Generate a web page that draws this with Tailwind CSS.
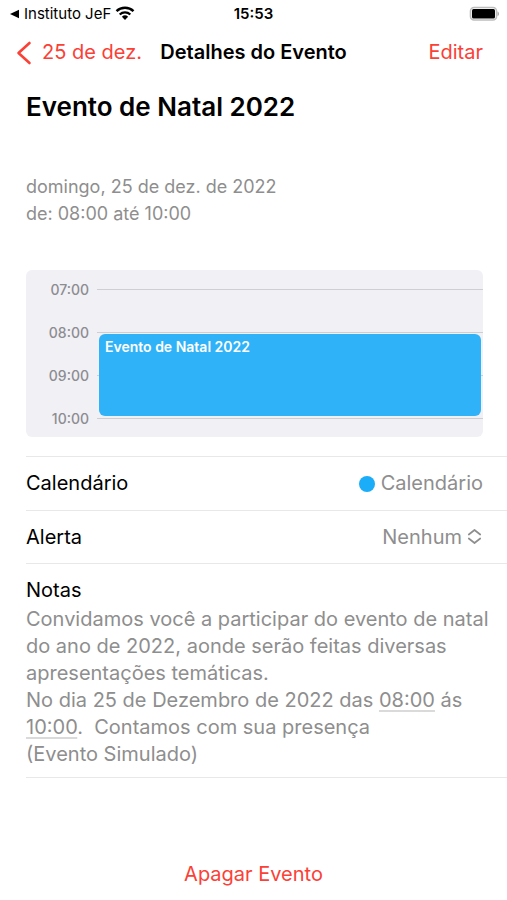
<!DOCTYPE html>
<html lang="pt-BR">
<head>
<meta charset="utf-8">
<meta name="viewport" content="width=device-width, initial-scale=1">
<title>Detalhes do Evento</title>
<script src="https://cdn.jsdelivr.net/npm/@tailwindcss/browser@4"></script>
</head>
<body class="min-h-screen flex flex-col bg-white text-black text-[20px] leading-[27px] font-['Inter','Liberation_Sans',sans-serif]">

<!-- Status bar -->
<div class="grid grid-cols-[1fr_auto_1fr] items-center h-[27px] px-2 text-[15px] leading-[20px]">
  <div class="flex items-center gap-1">
    <svg class="w-3 h-3" viewBox="0 0 12 12" aria-hidden="true"><path d="M2 6 11 1.8v8.4z"/></svg>
    <a href="#">Instituto JeF</a>
    <svg class="w-5 h-4" viewBox="0 0 20 16" fill="none" stroke="#000" aria-label="Wi-Fi"><path d="M1.500 5.200a12.300 12.300 0 0 1 17 0" stroke-width="2.400"/><path d="M4.700 8.500a7.800 7.800 0 0 1 10.600 0" stroke-width="2.300"/><path d="M10 14l-3.100-3.200a4.500 4.500 0 0 1 6.200 0z" fill="#000" stroke="none"/></svg>
  </div>
  <time class="font-semibold">15:53</time>
  <svg class="justify-self-end w-[30px] h-4" viewBox="0 0 30 16" aria-label="Bateria"><rect x="1.500" y="1.500" width="26" height="12.500" rx="3.500" fill="#fff" stroke="#bdbdbd" stroke-width="1.600"/><rect x="3" y="3" width="23" height="9.500" rx="1.500" fill="#000"/><path d="M28.500 5.500c2 .6 2 4 0 4.600z" fill="#aaa"/></svg>
</div>

<!-- Navigation bar -->
<header class="grid grid-cols-[1fr_auto_1fr] items-center h-[51px] px-4">
  <a href="#" class="flex items-center gap-[10px] text-[#fb4036]">
    <svg class="w-4 h-6" viewBox="0 0 16 24" fill="none" stroke="currentColor" stroke-width="2.600" stroke-linecap="round" stroke-linejoin="round" aria-hidden="true"><path d="M13.500 2 2.500 12l11 10"/></svg>
    25 de dez.
  </a>
  <h1 class="font-semibold">Detalhes do Evento</h1>
  <button class="justify-self-end mr-2 text-[#fb4036]">Editar</button>
</header>

<main class="flex flex-col flex-1 pl-[26px] pt-3">
  <h2 class="text-[26px] leading-[34px] font-semibold">Evento de Natal 2022</h2>
  <p class="mt-[49px] text-[18px] text-[#8e8e8e]">domingo, 25 de dez. de 2022<br>de: 08:00 até 10:00</p>

  <!-- Day timeline -->
  <section class="relative mt-[43px] mr-6 pt-[12px] pb-[11px] flex flex-col gap-7 rounded-[6px] bg-[#f1f0f5] text-[14px] leading-[15px] font-medium text-[#8c8c91]">
    <div class="flex items-center gap-2"><span class="w-[63px] text-right">07:00</span><span class="flex-1 h-px bg-[#cfcfd3]"></span></div>
    <div class="flex items-center gap-2"><span class="w-[63px] text-right">08:00</span><span class="flex-1 h-px bg-[#cfcfd3]"></span></div>
    <div class="flex items-center gap-2"><span class="w-[63px] text-right">09:00</span><span class="flex-1 h-px bg-[#cfcfd3]"></span></div>
    <div class="flex items-center gap-2"><span class="w-[63px] text-right">10:00</span><span class="flex-1 h-px bg-[#cfcfd3]"></span></div>
    <div class="absolute left-[73px] right-[2px] top-16 bottom-[21px] px-[6px] py-[5px] rounded-[6px] bg-[#30b2f8] text-white font-semibold">Evento de Natal 2022</div>
  </section>

  <div class="mt-[19px] flex items-center justify-between h-[54px] pr-6 border-t border-[#e8e8e8]">
    <span>Calendário</span>
    <span class="flex items-center gap-[6px] text-[#8e8e8e]"><span class="size-4 rounded-full bg-[#1badf8]"></span>Calendário</span>
  </div>
  <div class="flex items-center justify-between h-[53px] pr-6 border-t border-[#e8e8e8]">
    <label for="alerta">Alerta</label>
    <span class="flex items-center gap-[5px] text-[#8e8e8e]">
      <select id="alerta" class="appearance-none field-sizing-content bg-transparent"><option>Nenhum</option><option>Na hora do evento</option></select>
      <svg class="w-4 h-5" viewBox="0 0 16 20" fill="none" stroke="currentColor" stroke-width="1.700" stroke-linecap="round" stroke-linejoin="round" aria-hidden="true"><path d="M1.800 7.500 7.500 3l5.700 4.500M1.800 11.500 7.500 16l5.700-4.500"/></svg>
    </span>
  </div>
  <section class="pt-[13px] pb-[9px] border-y border-[#e8e8e8]">
    <h3>Notas</h3>
    <p class="mt-[2px] pr-4 text-[#8e8e8e]">Convidamos você a participar do evento de natal do ano de 2022, aonde serão feitas diversas apresentações temáticas.<br>No dia 25 de Dezembro de 2022 das <a href="#" class="underline decoration-2 underline-offset-3 decoration-[#dadada]">08:00</a> ás <a href="#" class="underline decoration-2 underline-offset-3 decoration-[#dadada]">10:00</a>.&nbsp; Contamos com sua presença<br>(Evento Simulado)</p>
  </section>
</main>

<footer class="flex justify-center pb-3">
  <button class="text-[#fb4036]">Apagar Evento</button>
</footer>
</body>
</html>
